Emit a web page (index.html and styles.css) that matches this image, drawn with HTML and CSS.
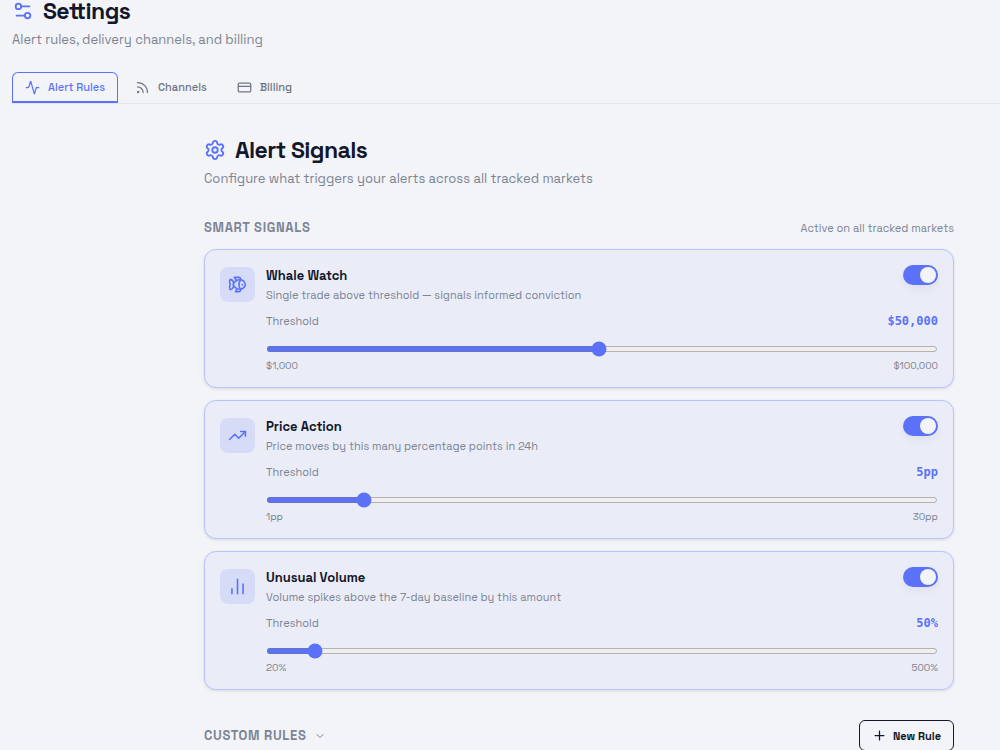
FILE: index.html
```html
<!DOCTYPE html>
<html lang="en">
<head>
    <meta charset="UTF-8">
    <meta name="viewport" content="width=device-width, initial-scale=1.0">
    <title>Settings</title>
    <link rel="stylesheet" href="styles.css">
</head>
<body>
    <header class="page-header">
        <h1 class="title">
            <svg class="icon icon-lg" viewBox="0 0 24 24"><path d="M14 17H5M19 7h-9"/><circle cx="17" cy="17" r="3"/><circle cx="7" cy="7" r="3"/></svg>
            Settings
        </h1>
        <p class="subtitle">Alert rules, delivery channels, and billing</p>
    </header>

    <nav class="tabs">
        <a class="tab active" href="#rules">
            <svg class="icon icon-sm" viewBox="0 0 24 24"><path d="M22 12h-2.48a2 2 0 0 0-1.93 1.46l-2.35 8.36a.25.25 0 0 1-.48 0L9.24 2.18a.25.25 0 0 0-.48 0l-2.35 8.36A2 2 0 0 1 4.49 12H2"/></svg>
            Alert Rules
        </a>
        <a class="tab" href="#channels">
            <svg class="icon icon-sm" viewBox="0 0 24 24"><path d="M4 11a9 9 0 0 1 9 9M4 4a16 16 0 0 1 16 16"/><circle cx="5" cy="19" r="1"/></svg>
            Channels
        </a>
        <a class="tab" href="#billing">
            <svg class="icon icon-sm" viewBox="0 0 24 24"><rect x="2" y="5" width="20" height="14" rx="2"/><path d="M2 10h20"/></svg>
            Billing
        </a>
    </nav>

    <main class="content" id="rules">
        <h2 class="title">
            <svg class="icon icon-lg" viewBox="0 0 24 24"><path d="M9.671 4.136a2.34 2.34 0 0 1 4.659 0 2.34 2.34 0 0 0 3.319 1.915 2.34 2.34 0 0 1 2.33 4.033 2.34 2.34 0 0 0 0 3.831 2.34 2.34 0 0 1-2.33 4.033 2.34 2.34 0 0 0-3.319 1.915 2.34 2.34 0 0 1-4.659 0 2.34 2.34 0 0 0-3.32-1.915 2.34 2.34 0 0 1-2.33-4.033 2.34 2.34 0 0 0 0-3.831A2.34 2.34 0 0 1 6.35 6.051a2.34 2.34 0 0 0 3.319-1.915"/><circle cx="12" cy="12" r="3"/></svg>
            Alert Signals
        </h2>
        <p class="subtitle">Configure what triggers your alerts across all tracked markets</p>

        <div class="section-head">
            <h3 class="section-title">Smart Signals</h3>
            <span class="section-note">Active on all tracked markets</span>
        </div>

        <div class="cards">
            <section class="card">
                <div class="badge">
                    <svg class="icon icon-md" viewBox="0 0 24 24"><path d="M6.5 12c.94-3.46 4.94-6 8.5-6 3.56 0 6.06 2.54 7 6-.94 3.47-3.44 6-7 6s-7.56-2.53-8.5-6Z"/><path d="M18 12v.5"/><path d="M16 17.93a9.77 9.77 0 0 1 0-11.86"/><path d="M7 10.67C7 8 5.58 5.97 2.73 5.5c-1 1.5-1 5 .23 6.5-1.24 1.5-1.24 5-.23 6.5C5.58 18.03 7 16 7 13.33"/><path d="M10.46 7.26C10.2 5.88 9.17 4.24 8 3h5.8a2 2 0 0 1 1.98 1.67l.23 1.4"/><path d="m16.01 17.93-.23 1.4A2 2 0 0 1 13.8 21H9.5a5.96 5.96 0 0 0 1.49-3.98"/></svg>
                </div>
                <div class="card-body">
                    <div class="row card-top">
                        <label class="card-title" for="whaleOn">Whale Watch</label>
                        <input class="switch" type="checkbox" id="whaleOn" checked>
                    </div>
                    <p class="card-text">Single trade above threshold — signals informed conviction</p>
                    <div class="row threshold">
                        <label for="whaleRange">Threshold</label>
                        <output class="value" for="whaleRange">$50,000</output>
                    </div>
                    <input class="range" type="range" id="whaleRange" min="1000" max="100000" step="1000" value="50000">
                    <div class="row limits"><span>$1,000</span><span>$100,000</span></div>
                </div>
            </section>

            <section class="card">
                <div class="badge">
                    <svg class="icon icon-md" viewBox="0 0 24 24"><path d="M16 7h6v6"/><path d="m22 7-8.500 8.500-5-5L2 17"/></svg>
                </div>
                <div class="card-body">
                    <div class="row card-top">
                        <label class="card-title" for="priceOn">Price Action</label>
                        <input class="switch" type="checkbox" id="priceOn" checked>
                    </div>
                    <p class="card-text">Price moves by this many percentage points in 24h</p>
                    <div class="row threshold">
                        <label for="priceRange">Threshold</label>
                        <output class="value" for="priceRange">5pp</output>
                    </div>
                    <input class="range" type="range" id="priceRange" min="1" max="30" value="5">
                    <div class="row limits"><span>1pp</span><span>30pp</span></div>
                </div>
            </section>

            <section class="card">
                <div class="badge">
                    <svg class="icon icon-md" viewBox="0 0 24 24"><path d="M5 21v-6M12 21V3M19 21V9"/></svg>
                </div>
                <div class="card-body">
                    <div class="row card-top">
                        <label class="card-title" for="volumeOn">Unusual Volume</label>
                        <input class="switch" type="checkbox" id="volumeOn" checked>
                    </div>
                    <p class="card-text">Volume spikes above the 7-day baseline by this amount</p>
                    <div class="row threshold">
                        <label for="volumeRange">Threshold</label>
                        <output class="value" for="volumeRange">50%</output>
                    </div>
                    <input class="range" type="range" id="volumeRange" min="20" max="500" step="10" value="50">
                    <div class="row limits"><span>20%</span><span>500%</span></div>
                </div>
            </section>
        </div>

        <div class="row custom">
            <button class="section-title toggle" type="button">
                Custom Rules
                <svg class="icon icon-xs" viewBox="0 0 24 24"><path d="m6 9 6 6 6-6"/></svg>
            </button>
            <button class="new-rule" type="button">
                <svg class="icon icon-sm" viewBox="0 0 24 24"><path d="M5 12h14M12 5v14"/></svg>
                New Rule
            </button>
        </div>
    </main>
</body>
</html>
```
FILE: styles.css
```css
* {
    box-sizing: border-box;
}

body {
    font-family: "Space Grotesk", Inter, sans-serif;
    font-size: 11px;
    color: #7c8494;
    background-color: #f3f4f8;
    margin: 0;
    padding-left: 12px;
    overflow: hidden;
}

h1, h2, h3, p {
    margin: 0;
}

button {
    font-family: inherit;
    cursor: pointer;
}

.icon {
    fill: none;
    stroke: currentColor;
    stroke-width: 2;
    stroke-linecap: round;
    stroke-linejoin: round;
    flex: none;
}

.icon-lg {
    width: 22px;
    height: 22px;
    color: #5b72f8;
}

.icon-md {
    width: 19px;
    height: 19px;
}

.icon-sm {
    width: 15px;
    height: 15px;
}

.icon-xs {
    width: 12px;
    height: 12px;
}

.title {
    display: flex;
    align-items: center;
    gap: 9px;
    font-size: 23px;
    line-height: 22px;
    font-weight: 700;
    letter-spacing: -0.025em;
    color: #12172b;
}

.subtitle {
    margin-top: 8px;
    font-size: 13px;
    line-height: 20px;
}

.tabs {
    display: flex;
    gap: 4px;
    margin-top: 22px;
    border-bottom: 1px solid #e2e5eb;
}

.tab {
    display: flex;
    align-items: center;
    gap: 8px;
    height: 31px;
    padding: 0 12px;
    border: 1px solid transparent;
    border-bottom-width: 2px;
    font-weight: 500;
    color: #6e7686;
    text-decoration: none;
}

.tab.active {
    color: #5b72f8;
    border-color: #5b72f8;
    border-radius: 6px 6px 0 0;
}

.content {
    margin: 35px 46px 0 192px;
}

.section-head {
    display: flex;
    justify-content: space-between;
    align-items: center;
    margin: 29px 0 11px;
    line-height: 20px;
}

.section-title {
    font-size: 13px;
    font-weight: 700;
    letter-spacing: 0.05em;
    text-transform: uppercase;
    color: #7c8494;
}

.cards {
    display: flex;
    flex-direction: column;
    gap: 12px;
}

.card {
    display: flex;
    gap: 11px;
    padding: 15px;
    background-color: #eaedf7;
    border: 1px solid #b9c4fb;
    border-radius: 12px;
    box-shadow: 0 1px 3px rgba(18, 23, 43, 0.12);
}

.badge {
    display: flex;
    align-items: center;
    justify-content: center;
    width: 35px;
    height: 35px;
    margin-top: 2px;
    border-radius: 8px;
    color: #5b72f8;
    background-color: #d6dcf8;
}

.card-body {
    flex: 1;
}

.row {
    display: flex;
    justify-content: space-between;
    align-items: center;
}

.card-top {
    height: 20px;
}

.card-title {
    font-size: 13px;
    font-weight: 600;
    color: #12172b;
}

.card-text {
    line-height: 20px;
}

.threshold {
    height: 20px;
    margin-top: 6px;
}

.value {
    font-family: "DejaVu Sans Mono", monospace;
    font-size: 12px;
    font-weight: 700;
    color: #5b72f8;
}

.range {
    display: block;
    width: 100%;
    height: 6px;
    margin: 15px 0 6px;
    accent-color: #5b72f8;
}

.limits {
    height: 14px;
    font-size: 10px;
}

.switch {
    appearance: none;
    display: flex;
    align-items: center;
    width: 35px;
    height: 20px;
    margin: 0;
    padding: 2px;
    border-radius: 10px;
    background-color: #cdd2de;
    box-shadow: 0 4px 8px rgba(18, 23, 43, 0.05);
}

.switch::before {
    content: "";
    width: 16px;
    height: 16px;
    border-radius: 50%;
    background-color: #f3f4f8;
}

.switch:checked {
    justify-content: flex-end;
    background-color: #5b72f8;
}

.custom {
    margin-top: 30px;
}

.toggle {
    display: flex;
    align-items: center;
    gap: 8px;
    padding: 0;
    border: 0;
    background: none;
}

.new-rule {
    display: flex;
    align-items: center;
    gap: 6px;
    height: 31px;
    padding: 0 12px;
    border: 1px solid #12172b;
    border-radius: 6px;
    background: none;
    font-size: 11px;
    font-weight: 600;
    color: #12172b;
}
```
